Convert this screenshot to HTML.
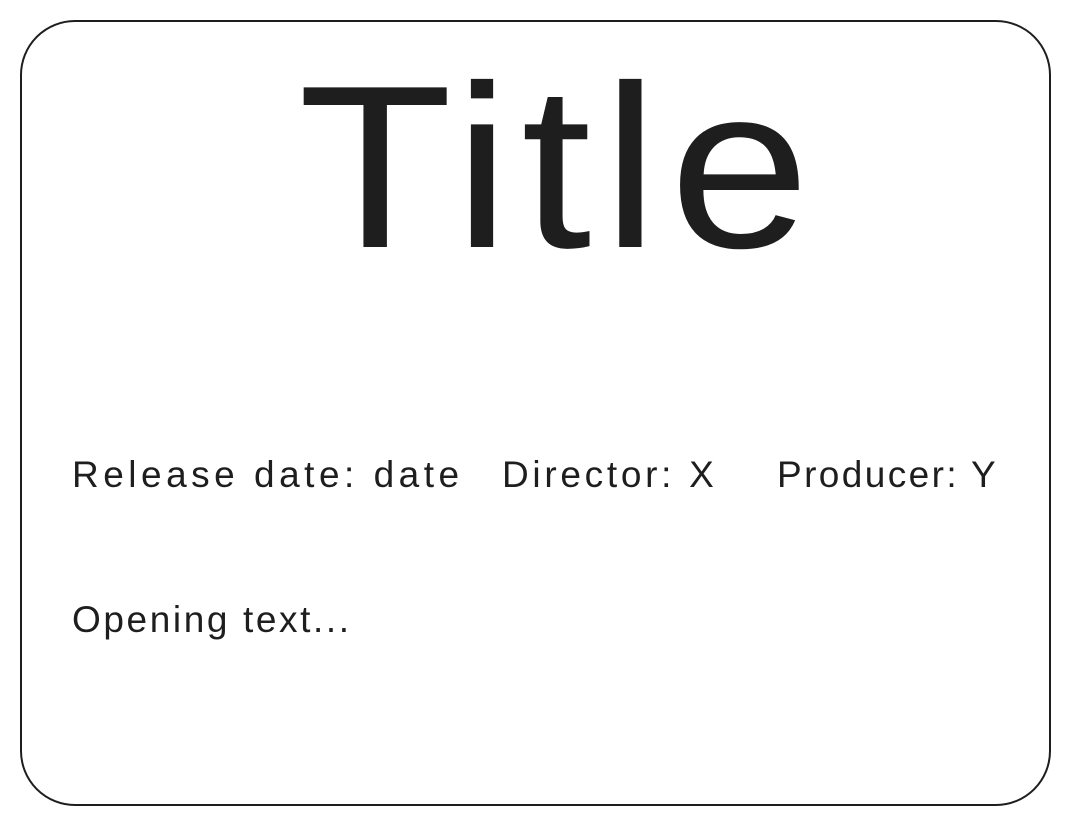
<!DOCTYPE html>
<html><head><meta charset="utf-8"><style>
html,body{margin:0;padding:0;background:#fff;width:1072px;height:828px;overflow:hidden}
.box{position:absolute;left:20px;top:20px;width:1031px;height:786px;border:2px solid #1e1e1e;border-radius:55px;box-sizing:border-box}
.t{position:absolute;font-family:"Liberation Sans",sans-serif;color:#1e1e1e;white-space:nowrap;line-height:1}
</style></head><body>
<div class="box"></div>
<div class="t" style="left:298px;top:52px;font-size:232px;letter-spacing:10px;transform:scaleX(1.09);transform-origin:left top">Title</div>
<div class="t" style="left:72px;top:456px;font-size:37px;letter-spacing:4.5px">Release date: date</div>
<div class="t" style="left:502px;top:456px;font-size:37px;letter-spacing:3.7px">Director: X</div>
<div class="t" style="left:777px;top:456px;font-size:37px;letter-spacing:2.4px">Producer: Y</div>
<div class="t" style="left:72px;top:601px;font-size:37px;letter-spacing:2.6px">Opening text...</div>
</body></html>
